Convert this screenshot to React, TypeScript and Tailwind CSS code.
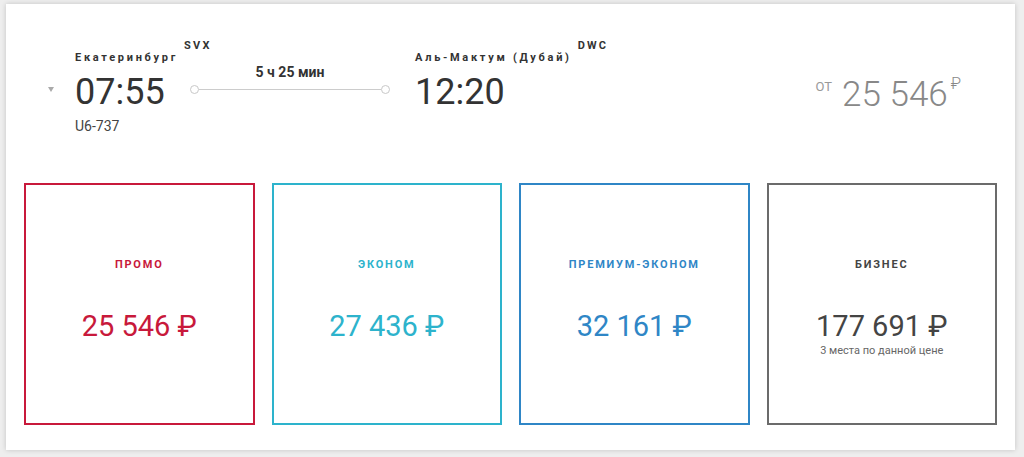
const fares = [
  { name: "ПРОМО", price: "25 546 ₽", border: "border-[#c8193b]", text: "text-[#c8193b]" },
  { name: "ЭКОНОМ", price: "27 436 ₽", border: "border-[#2db3cc]", text: "text-[#2db3cc]" },
  { name: "ПРЕМИУМ-ЭКОНОМ", price: "32 161 ₽", border: "border-[#2f86c6]", text: "text-[#2f86c6]" },
  { name: "БИЗНЕС", price: "177 691 ₽", border: "border-[#6b6b6b]", text: "text-[#444444]", note: "3 места по данной цене" },
];

function Place({ city, code }: { city: string; code: string }) {
  return (
    <div className="flex items-start h-[18px] whitespace-nowrap">
      <span className="text-[11px] font-bold tracking-[2.7px] text-[#333] leading-[18px] pt-[5px]">{city}</span>
      <span className="ml-[6px] text-[11px] font-bold tracking-[2.2px] text-[#333] leading-[12px] -mt-[4px]">{code}</span>
    </div>
  );
}

export default function App() {
  return (
    <div className="min-h-screen bg-[#eeeeee] pt-[4px] pl-[6px]" style={{ fontFamily: "Roboto, 'Liberation Sans', sans-serif" }}>
      <div className="w-[1009px] h-[446px] bg-white shadow-[0_0_5px_rgba(0,0,0,0.18)]">
        <div className="flex items-start pt-[40px] h-[179px]">
          <div className="w-[69px] pl-[42px] pt-[43px]">
            <div className="w-0 h-0 border-l-[3px] border-r-[3px] border-t-[5px] border-l-transparent border-r-transparent border-t-[#aaaaaa]" />
          </div>
          <div className="w-[115px]">
            <Place city="Екатеринбург" code="SVX" />
            <div className="text-[36px] leading-[42px] text-[#333] mt-[9px]">07:55</div>
            <div className="text-[14px] leading-[18px] text-[#444] mt-[4px]">U6-737</div>
          </div>
          <div className="w-[200px] pt-[20px] flex flex-col items-center">
            <div className="text-[14px] font-bold text-[#333] leading-[16px]">5 ч 25 мин</div>
            <div className="w-full flex items-center mt-[5px]">
              <div className="w-[9px] h-[9px] rounded-full border border-[#c8c8c8] bg-white" />
              <div className="flex-1 h-[1px] bg-[#cccccc]" />
              <div className="w-[9px] h-[9px] rounded-full border border-[#c8c8c8] bg-white" />
            </div>
          </div>
          <div className="ml-[25px]">
            <Place city="Аль-Мактум (Дубай)" code="DWC" />
            <div className="text-[36px] leading-[42px] text-[#333] mt-[9px]">12:20</div>
          </div>
          <div className="flex-1 flex justify-end pr-[54px] pt-[30px]">
            <div className="flex items-start text-[#888]">
              <span className="text-[13px] leading-[14px] mt-[6px] mr-[10px] text-[#999]">ОТ</span>
              <span className="text-[35px] font-light leading-[42px]">25 546</span>
              <span className="text-[16px] font-light leading-[16px] mt-[2px] ml-[3px]">₽</span>
            </div>
          </div>
        </div>
        <div className="grid grid-cols-4 gap-[17px] px-[18px]">
          {fares.map((f) => (
            <div key={f.name} className={`h-[242px] border-2 ${f.border} flex flex-col items-center pt-[73px]`}>
              <div className={`text-[11px] font-bold tracking-[1.8px] leading-[14px] ${f.text}`}>{f.name}</div>
              <div className={`text-[29px] leading-[32px] mt-[38px] ${f.text}`}>{f.price}</div>
              {f.note && <div className="text-[11px] leading-[14px] text-[#666] mt-[2px]">{f.note}</div>}
            </div>
          ))}
        </div>
      </div>
    </div>
  );
}
